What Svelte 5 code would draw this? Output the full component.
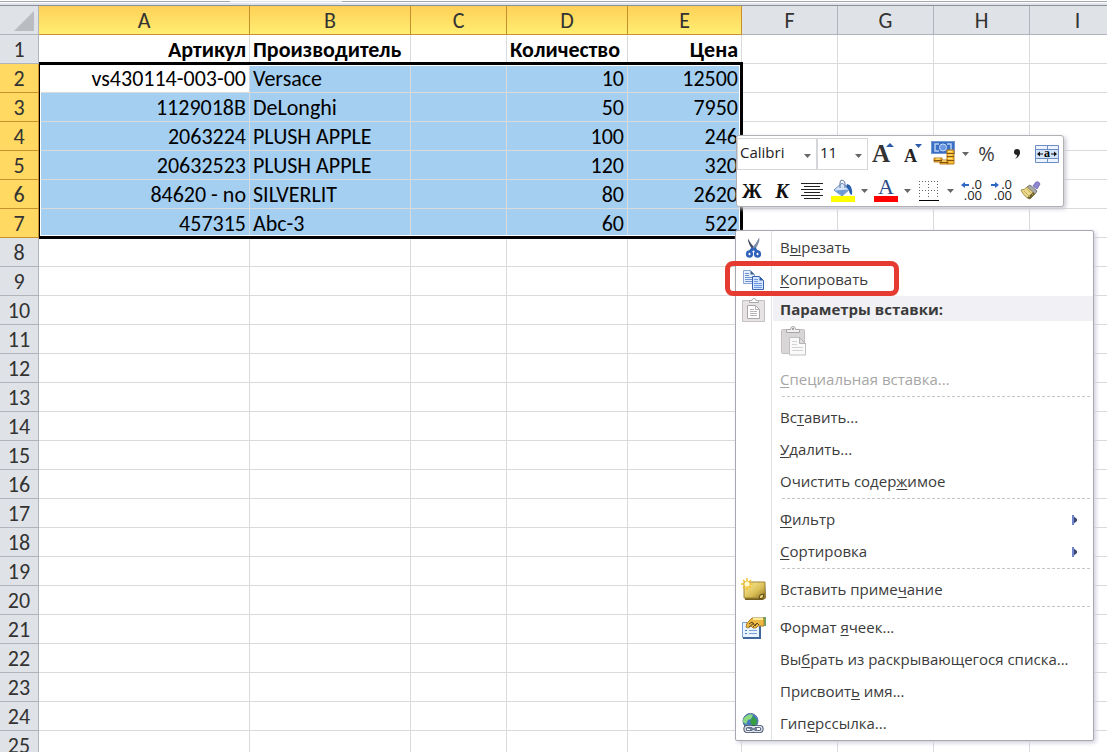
<script lang="ts">
	type Entry = {
		kind?: 'item' | 'title' | 'paste' | 'separator';
		before?: string;
		key?: string;
		after?: string;
		icon?: string;
		disabled?: boolean;
		submenu?: boolean;
		marked?: boolean;
	};

	const columns = [
		{ name: 'A', width: 211, selected: true },
		{ name: 'B', width: 161, selected: true },
		{ name: 'C', width: 96, selected: true },
		{ name: 'D', width: 121, selected: true },
		{ name: 'E', width: 114, selected: true },
		{ name: 'F', width: 96, selected: false },
		{ name: 'G', width: 96, selected: false },
		{ name: 'H', width: 96, selected: false },
		{ name: 'I', width: 96, selected: false }
	];

	const data: string[][] = [
		['Артикул', 'Производитель', '', 'Количество', 'Цена'],
		['vs430114-003-00', 'Versace', '', '10', '12500'],
		['1129018B', 'DeLonghi', '', '50', '7950'],
		['2063224', 'PLUSH APPLE', '', '100', '246'],
		['20632523', 'PLUSH APPLE', '', '120', '320'],
		['84620 - no', 'SILVERLIT', '', '80', '2620'],
		['457315', 'Abc-3', '', '60', '522']
	];

	const rows = Array.from({ length: 25 }, (_, i) => i);

	const entries: Entry[] = [
		{ before: 'В', key: 'ы', after: 'резать', icon: 'cut' },
		{ before: '', key: 'К', after: 'опировать', icon: 'copy', marked: true },
		{ kind: 'title', before: 'Параметры вставки:' },
		{ kind: 'paste' },
		{ before: '', key: 'С', after: 'пециальная вставка...', disabled: true },
		{ kind: 'separator' },
		{ before: 'Вс', key: 'т', after: 'авить...' },
		{ before: '', key: 'У', after: 'далить...' },
		{ before: 'Очистить содер', key: 'ж', after: 'имое' },
		{ kind: 'separator' },
		{ before: '', key: 'Ф', after: 'ильтр', submenu: true },
		{ before: '', key: 'С', after: 'ортировка', submenu: true },
		{ kind: 'separator' },
		{ before: 'Вставить приме', key: 'ч', after: 'ание', icon: 'note' },
		{ kind: 'separator' },
		{ before: 'Формат ', key: 'я', after: 'чеек...', icon: 'format' },
		{ before: 'Вы', key: 'б', after: 'рать из раскрывающегося списка...' },
		{ before: 'Присвоит', key: 'ь', after: ' имя...' },
		{ before: 'Гип', key: 'е', after: 'рссылка...', icon: 'link' }
	];

	let font = $state('Calibri');
	let size = $state('11');
</script>

{#snippet arrow()}
	<svg width="7" height="4" viewBox="0 0 7 4"><path d="M0 0h7L3.500 4z" fill="#666" /></svg>
{/snippet}

{#snippet clipboard(big: boolean)}
	<svg width={big ? 28 : 24} height={big ? 32 : 24} viewBox={big ? '0 0 28 32' : '0 0 24 24'}>
		{#if big}
			<rect x="1.500" y="4.500" width="23" height="24" rx="1" fill="#d9d6d8" stroke="#c3bfc1" />
			<path d="M6.500 7.500v-3h4q0-3 2.500-3t2.500 3h4v3z" fill="#f2f1f2" stroke="#aaa6a8" />
			<circle cx="13" cy="4" r="1" fill="#888" />
			<path d="M9.500 12.500h10l6 6v11.500h-16z" fill="#fafafa" stroke="#c2bfc1" />
			<path d="M19.500 12.500v6h6z" fill="#ddd" stroke="#b5b2b4" />
			<path d="M12 16.500h5M12 19.500h5M12 22.500h11M12 25.500h11" stroke="#d5d2d5" />
		{:else}
			<path d="M.500 2.500h22v21H.500z" fill="#e7e3e5" stroke="#c4bfc2" />
			<path d="M7.500 4.500v-2h2.500q0-2 2-2t2 2h2.500v2z" fill="#fff" stroke="#aaa" />
			<path d="M5.500 7.500h8l4 4v9h-12z" fill="#fff" stroke="#aaa6a9" />
			<path d="M13.500 7.500v4h4M8 11.500h4M8 13.500h7M8 15.500h7M8 17.500h7" fill="none" stroke="#b9b5b8" />
		{/if}
	</svg>
{/snippet}

{#snippet menuIcon(name?: string)}
	{#if name === 'cut'}
		<svg width="24" height="24" viewBox="0 0 24 24">
			<path d="M6 2.500q-.500 4 5 12l2-2Q8 7 6 2.500z" fill="#3d4b60" />
			<path d="M17 2.500q.500 4-5 12l-2-2q5-5.500 7-10z" fill="#8094b0" stroke="#53647c" stroke-width=".5" />
			<path d="M11 12l-3 4M12 12l3 4" stroke="#2f63bb" stroke-width="3" />
			<ellipse cx="7.500" cy="18" rx="2.300" ry="2.500" fill="#fff" stroke="#2f63bb" stroke-width="2.600" />
			<ellipse cx="15.500" cy="18" rx="2.300" ry="2.500" fill="#fff" stroke="#2f63bb" stroke-width="2.600" />
		</svg>
	{:else if name === 'copy'}
		<svg width="24" height="24" viewBox="0 0 24 24">
			<path d="M1.500 2.500h7l4 4v9h-11z" fill="#e6effc" stroke="#8ba5d2" />
			<path d="M8.500 2.500v4h4z" fill="#405f91" />
			<path d="M3 5.500h4M3 7.500h4M3 9.500h8M3 11.500h8M3 13.500h8" stroke="#6c91cf" />
			<path d="M10.500 8.500h7l4 4v9h-11z" fill="#d5e5ff" stroke="#3862ad" />
			<path d="M17.500 8.500v4h4z" fill="#315aa7" />
			<path d="M12 11.500h4M12 13.500h4M12 15.500h8M12 17.500h8M12 19.500h8" stroke="#6f9ae3" />
		</svg>
	{:else if name === 'note'}
		<svg width="26" height="24" viewBox="0 0 26 24">
			<defs>
				<linearGradient id="note" x2="1" y2="1">
					<stop offset="0" stop-color="#fff3a0" />
					<stop offset=".6" stop-color="#d9bd55" />
					<stop offset="1" stop-color="#8e7022" />
				</linearGradient>
			</defs>
			<path d="M4 5h20l1 15-3 2H4z" fill="#766021" />
			<path d="M3 4h21v16H3z" fill="url(#note)" stroke="#9d8434" />
			<path d="M18 21l1-4 4-1-1 4z" fill="#ead87d" stroke="#5b4715" />
			<path d="M6 0v12M0 6h12M2 2l8 8M10 2l-8 8" stroke="#f6bf2c" stroke-width="1.500" />
			<circle cx="6" cy="6" r="2.500" fill="#fffbd0" />
		</svg>
	{:else if name === 'format'}
		<svg width="26" height="24" viewBox="0 0 26 24">
			<path d="M1.500 6.500h17v15h-17z" fill="#e8f3ff" stroke="#7ba0cf" />
			<path d="M19 8v14H2" fill="none" stroke="#3f689f" stroke-width="2" />
			<path d="M4 14.500h2M4 17.500h2" stroke="#497dc5" />
			<path d="M8 14.500h8M8 17.500h8" stroke="#7ba2d8" />
			<path d="M22 1h3v9h-3z" fill="#69a869" />
			<path d="M6 7l5-5h12v8h-6l-2 2h-3l-2-2-3 2-2-1z" fill="#edb942" stroke="#a8802e" />
			<path d="M8 8l3-2 3 4 2-3 2 2M8 11l5-4M12 11l3-3" fill="none" stroke="#5c4722" />
			<path d="M12 3h10" stroke="#ffe898" stroke-width="2" />
		</svg>
	{:else if name === 'link'}
		<svg width="24" height="24" viewBox="0 0 24 24">
			<circle cx="8.500" cy="9" r="7.500" fill="#4779c5" stroke="#54709b" />
			<path d="M4 4q4-3 7-1l-2 4-3 1-2 4-3-2q0-4 3-6z" fill="#8bdb80" />
			<path d="M11 4l4 4-1 6-4-1-2-3z" fill="#379e43" />
			<path d="M4 12l4 2-1 2q-3-1-3-4z" fill="#65bd5d" />
			<rect x="3" y="14.500" width="9" height="5" rx="2.500" fill="none" stroke="#38455c" stroke-width="3.200" />
			<rect x="11" y="14.500" width="9" height="5" rx="2.500" fill="none" stroke="#38455c" stroke-width="3.200" />
			<rect x="3" y="14.500" width="9" height="5" rx="2.500" fill="none" stroke="#e4eaf5" stroke-width="1.300" />
			<rect x="11" y="14.500" width="9" height="5" rx="2.500" fill="none" stroke="#e4eaf5" stroke-width="1.300" />
			<path d="M8 17h7" stroke="#718198" stroke-width="2" />
		</svg>
	{/if}
{/snippet}

<main class="window">
	<div class="ribbon-edge"><span class="tab-edge"></span></div>

	<div class="sheet">
		<table>
			<colgroup>
				<col style:width="39px" />
				{#each columns as column}
					<col style:width="{column.width}px" />
				{/each}
			</colgroup>
			<thead>
				<tr>
					<th class="corner" aria-label="Выделить все">
						<svg width="20" height="20" viewBox="0 0 20 20"><path d="M20 0v20H0z" fill="#b9bdc2" /></svg>
					</th>
					{#each columns as column}
						<th scope="col" class:selected={column.selected}>{column.name}</th>
					{/each}
				</tr>
			</thead>
			<tbody>
				{#each rows as r}
					<tr class:title-row={r === 0}>
						<th scope="row" class:selected={r > 0 && r < 7}>{r + 1}</th>
						{#each columns as column, c}
							<td
								class:left={c === 1 || (r === 0 && c === 3)}
								class:range={r > 0 && r < 7 && column.selected}
								class:active={r === 1 && c === 0}>{data[r]?.[c] ?? ''}</td
							>
						{/each}
					</tr>
				{/each}
			</tbody>
		</table>
		<div class="selection"></div>
	</div>

	<div class="mini-toolbar" role="toolbar" aria-label="Форматирование">
		<div class="tool-row">
			<label class="font-box">
				<select bind:value={font} aria-label="Шрифт"><option>Calibri</option></select>
				{@render arrow()}
			</label>
			<label class="size-box">
				<select bind:value={size} aria-label="Размер шрифта"><option>11</option></select>
				{@render arrow()}
			</label>
			<button aria-label="Увеличить размер шрифта">
				<svg width="24" height="28" viewBox="0 0 24 28">
					<text x="1" y="22" class="serif" font-size="25" fill="#333">A</text>
					<path d="M15 7l4-4 4 4z" fill="#2c5ba9" />
				</svg>
			</button>
			<button aria-label="Уменьшить размер шрифта">
				<svg width="24" height="28" viewBox="0 0 24 28">
					<text x="3" y="22" class="serif" font-size="18" fill="#222">A</text>
					<path d="M14 4h7l-3.500 4z" fill="#2c5ba9" />
				</svg>
			</button>
			<button class="wide" aria-label="Денежный формат">
				<svg width="26" height="28" viewBox="0 0 26 28">
					<rect x=".500" y="1.500" width="23" height="12" fill="#3a6fc2" stroke="#6f97d6" />
					<path d="M8 4H4v7h4M16 4h4v7h-4" fill="none" stroke="#b5cff5" stroke-width="1.500" />
					<circle cx="12" cy="7.500" r="3.500" fill="#6b9ae0" stroke="#c5dcff" />
					<path d="M3 18h8v4H3zM9 20h8v4H9zM16 10h7v14h-7z" fill="#f7bd35" stroke="#b77a18" />
					<path d="M3 20.500h8M9 22.500h8M16 13.500h7M16 16.500h7M16 20.500h7" stroke="#805010" />
					<path d="M17 11.500h4M17 15h4M17 18.500h4M5 19h4M11 21h4" stroke="#ffe58a" />
				</svg>
			</button>
			<button class="drop" aria-label="Денежные форматы">{@render arrow()}</button>
			<button class="wide percent">%</button>
			<button class="comma" aria-label="Формат с разделителями">
				<svg width="12" height="24" viewBox="0 0 12 24">
					<circle cx="6" cy="10" r="3" fill="#222" />
					<path d="M9 10q0 5-5 7 3-3 2-6z" fill="#222" />
				</svg>
			</button>
			<button aria-label="Объединить и поместить в центре">
				<svg width="24" height="20" viewBox="0 0 24 20">
					<path d="M.500 1.500h23v17H.500zM.500 5.500h23M.500 14.500h23M12.500 1v4M12.500 15v4" fill="#edf4ff" stroke="#6d8ec4" />
					<rect x="1" y="6" width="22" height="8" fill="#d3e3fa" />
					<path d="M3 10h5M16 10h5" stroke="#111" />
					<path d="M2 10l3-2.500v5zM22 10l-3-2.500v5z" fill="#111" />
					<text x="12" y="13" text-anchor="middle" class="serif" font-size="12">a</text>
				</svg>
			</button>
		</div>
		<div class="tool-row">
			<button class="letter">Ж</button>
			<button class="letter italic">К</button>
			<button aria-label="По центру">
				<svg width="22" height="18" viewBox="0 0 22 18">
					<path d="M0 1.500h22M3 4.500h16M0 7.500h22M3 10.500h16M0 13.500h22M3 16.500h16" stroke="#222" />
				</svg>
			</button>
			<button class="wide" aria-label="Цвет заливки">
				<svg width="24" height="24" viewBox="0 0 24 24">
					<path d="M3 11l8-7 8 6-8 7z" fill="#d5e4f9" stroke="#6b8fc4" />
					<path d="M4 11.500l14-1-7 6z" fill="#6f9ad6" />
					<path d="M9 9V4q0-3 2-3t3 3v5" fill="none" stroke="#61779d" />
					<path d="M16 5q6 1 5 11-3-1-3-5l-3-3z" fill="#2860ae" />
					<path d="M0 17h24v6H0z" fill="#ff0" />
				</svg>
			</button>
			<button class="drop" aria-label="Цвета заливки">{@render arrow()}</button>
			<button class="wide" aria-label="Цвет текста">
				<svg width="24" height="26" viewBox="0 0 24 26">
					<text x="12" y="16" text-anchor="middle" class="serif thin" font-size="22" fill="#294b86">A</text>
					<path d="M0 18h24v6H0z" fill="#f00" />
				</svg>
			</button>
			<button class="drop" aria-label="Цвета текста">{@render arrow()}</button>
			<button class="wide" aria-label="Нижняя граница">
				<svg width="20" height="20" viewBox="0 0 20 20">
					<path d="M0 .500h20M0 9.500h20M.500 0v18M9.500 0v18M18.500 0v18" stroke="#666" stroke-dasharray="1 2" />
					<path d="M0 19.500h20" stroke="#000" />
				</svg>
			</button>
			<button class="drop" aria-label="Границы">{@render arrow()}</button>
			<button class="wide" aria-label="Увеличить разрядность">
				<svg width="24" height="24" viewBox="0 0 24 24">
					<text x="22" y="10" text-anchor="end" class="digits">.0</text>
					<text x="22" y="21" text-anchor="end" class="digits">.00</text>
					<path d="M1 6l4-3v2h4v2H5v2z" fill="#2d67c6" />
				</svg>
			</button>
			<button aria-label="Уменьшить разрядность">
				<svg width="24" height="24" viewBox="0 0 24 24">
					<text x="22" y="10" text-anchor="end" class="digits">.0</text>
					<text x="22" y="21" text-anchor="end" class="digits">.00</text>
					<path d="M9 6L5 3v2H1v2h4v2z" fill="#2d67c6" />
				</svg>
			</button>
			<button aria-label="Формат по образцу">
				<svg width="22" height="20" viewBox="0 0 22 20">
					<path d="M12 5l3-4q3-1 4 2l-3 5z" fill="#8d87d0" stroke="#7a73b8" />
					<path d="M9 4l7 6-2 3-8-7z" fill="#aaa" stroke="#777" />
					<path d="M6 6l8 7-5 5Q3 16 0 9q4 0 6-3z" fill="#ead98a" stroke="#a3904c" />
					<path d="M12 11l2 2-5 5-3-1z" fill="#6b6030" />
					<path d="M3 10l6 6M6 8l6 6" stroke="#c2ad60" />
				</svg>
			</button>
		</div>
	</div>

	<div class="context-menu" role="menu">
		{#each entries as entry}
			{#if entry.kind === 'separator'}
				<div class="separator" role="separator"></div>
			{:else if entry.kind === 'title'}
				<div class="menu-title">
					<span class="gutter">{@render clipboard(false)}</span>
					<strong>{entry.before}</strong>
				</div>
			{:else if entry.kind === 'paste'}
				<div class="paste-options">
					<button disabled aria-label="Вставить">{@render clipboard(true)}</button>
				</div>
			{:else}
				<button class="item" class:marked={entry.marked} role="menuitem" disabled={entry.disabled}>
					<span class="gutter">{@render menuIcon(entry.icon)}</span>
					<span class="caption">{entry.before}<u>{entry.key}</u>{entry.after}</span>
					{#if entry.submenu}
						<svg width="6" height="10" viewBox="0 0 6 10">
							<path d="M0 0l5 4v2l-5 4z" fill="#3c4674" />
							<path d="M0 0h2v10H0z" fill="#6d83cc" />
						</svg>
					{/if}
				</button>
			{/if}
		{/each}
	</div>
</main>

<style>
	:global(body) {
		margin: 0;
		background: #fff;
	}

	.window {
		position: relative;
		height: 100vh;
		overflow: hidden;
		font-family: 'Open Sans', 'Noto Sans', sans-serif;
		color: #3b3b3b;
	}

	.ribbon-edge {
		height: 5px;
		box-sizing: border-box;
		border-top: 1px solid #fff;
		background: linear-gradient(#a3a6aa 1px, #fff 1px, #fff 2px, #dfe3ea 2px);
	}

	.tab-edge {
		display: block;
		width: 112px;
		height: 1px;
		margin-left: 230px;
		background: #dfe3e7;
	}

	/* Grid */
	.sheet {
		position: relative;
		border-top: 1px solid #8b9097;
	}

	table {
		width: 0;
		table-layout: fixed;
		border-collapse: separate;
		border-spacing: 0;
		font-family: Carlito, Calibri, Lato, sans-serif;
		font-size: 22px;
		line-height: 26px;
		color: #000;
	}

	th,
	td {
		height: 29px;
		box-sizing: border-box;
		padding: 2px 3px 0;
		border-right: 1px solid #d9dadb;
		border-bottom: 1px solid #d9dadb;
		white-space: nowrap;
		text-align: right;
	}

	th {
		padding: 2px 0 0;
		background: #dfe2e7;
		border-color: #b0b5bb;
		color: #333;
		font-weight: 400;
		text-align: center;
	}

	thead th.selected {
		background: linear-gradient(#ffd058, #ffee72);
		border-color: #c6902f;
	}

	tbody th.selected {
		background: #ffd961;
		border-color: #c6902f;
	}

	.corner svg {
		display: block;
		margin: 0 4px 0 auto;
	}

	.title-row td {
		font-weight: 700;
	}

	td.left {
		text-align: left;
	}

	td.range {
		background: #a5cff0;
	}

	td.active {
		background: #fff;
	}

	.selection {
		position: absolute;
		top: 56px;
		left: 39px;
		width: 704px;
		height: 177px;
		box-sizing: border-box;
		border: 3px solid #000;
		border-left-width: 1px;
		box-shadow: inset 0 0 0 1px #fff;
		pointer-events: none;
	}

	/* Floating toolbar */
	.mini-toolbar {
		position: absolute;
		top: 135px;
		left: 736px;
		box-sizing: border-box;
		width: 328px;
		padding: 2px 0 0;
		height: 72px;
		background: #fff;
		border: 1px solid #b0b1b5;
		border-radius: 3px;
		box-shadow: 2px 2px 4px #c8c8d2;
	}

	.tool-row {
		display: flex;
		align-items: center;
		height: 32px;
	}

	.tool-row + .tool-row {
		margin-top: 5px;
	}

	button {
		display: flex;
		align-items: center;
		justify-content: center;
		padding: 0;
		border: 0;
		background: none;
		color: inherit;
		font: inherit;
	}

	.tool-row button {
		width: 30px;
		height: 30px;
	}

	.tool-row .wide {
		width: 31px;
	}

	.tool-row .comma {
		width: 30px;
	}

	.tool-row .drop {
		width: 12px;
	}

	.tool-row label {
		position: relative;
		box-sizing: border-box;
		height: 32px;
		border: 1px solid #d5d6d9;
	}

	.font-box {
		width: 80px;
	}

	.size-box {
		width: 51px;
	}

	.tool-row label svg {
		position: absolute;
		right: 5px;
		top: 15px;
		pointer-events: none;
	}

	.tool-row svg {
		overflow: visible;
	}

	select {
		display: block;
		width: 100%;
		height: 26px;
		padding: 0 2px;
		border: 0;
		appearance: none;
		background: none;
		color: #222;
		font-family: inherit;
		font-size: 15px;
	}

	.percent {
		font-size: 20px;
		line-height: 26px;
	}

	.letter {
		font-family: 'Liberation Serif', serif;
		font-size: 20px;
		font-weight: 700;
		color: #111;
	}

	.italic {
		font-style: italic;
	}

	.serif {
		font-family: 'Liberation Serif', serif;
		font-weight: 700;
	}

	.thin {
		font-weight: 400;
	}

	.digits {
		font-family: 'Open Sans', 'Noto Sans', sans-serif;
		font-size: 13px;
		fill: #222;
	}

	/* Context menu */
	.context-menu {
		position: absolute;
		top: 230px;
		left: 735px;
		width: 359px;
		box-sizing: border-box;
		padding: 1px 0 0;
		background: linear-gradient(#e2e3e6, #e2e3e6) 35px 0 / 1px 100% no-repeat #fff;
		border: 1px solid #a7a9b0;
		border-radius: 2px;
		box-shadow: 2px 2px 4px #d0cfdd;
		font-size: 15px;
		line-height: 20px;
	}

	.item {
		position: relative;
		width: 100%;
		height: 32px;
		justify-content: flex-start;
		text-align: left;
	}

	.item:disabled {
		color: #a6a6a6;
	}

	.item > svg {
		margin-right: 15px;
	}

	.gutter {
		display: flex;
		flex: none;
		justify-content: center;
		width: 35px;
	}

	.caption {
		flex: 1;
		padding: 0 0 2px 9px;
		white-space: nowrap;
	}

	.caption u {
		text-underline-offset: 2px;
	}

	.marked::after {
		content: '';
		position: absolute;
		top: -3px;
		left: -11px;
		z-index: 1;
		width: 174px;
		height: 35px;
		box-sizing: border-box;
		border: 5px solid #e53b30;
		border-radius: 8px;
	}

	.menu-title {
		display: flex;
		align-items: center;
		height: 25px;
	}

	.menu-title .gutter {
		margin-top: 3px;
	}

	.menu-title strong {
		flex: 1;
		height: 25px;
		margin-left: 2px;
		padding-left: 7px;
		background: #f0f0f5;
		line-height: 26px;
	}

	.paste-options {
		display: flex;
		align-items: center;
		height: 43px;
		padding: 0 0 4px 44px;
		box-sizing: border-box;
	}

	.separator {
		height: 6px;
		margin: 0 1px 0 46px;
		background: repeating-linear-gradient(90deg, #c5c5c5 0 3px, transparent 3px 5px) 0 0 / 100% 1px no-repeat;
	}
</style>
